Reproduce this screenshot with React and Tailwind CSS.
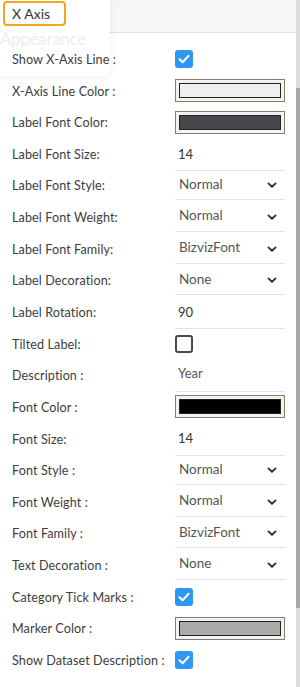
import React from 'react';

const rows = [
  { label: 'Show X-Axis Line :', type: 'check', checked: true },
  { label: 'X-Axis Line Color :', type: 'color', color: '#eef0ef' },
  { label: 'Label Font Color:', type: 'color', color: '#48484c' },
  { label: 'Label Font Size:', type: 'text', value: '14' },
  { label: 'Label Font Style:', type: 'select', value: 'Normal' },
  { label: 'Label Font Weight:', type: 'select', value: 'Normal' },
  { label: 'Label Font Family:', type: 'select', value: 'BizvizFont' },
  { label: 'Label Decoration:', type: 'select', value: 'None' },
  { label: 'Label Rotation:', type: 'text', value: '90' },
  { label: 'Tilted Label:', type: 'check', checked: false },
  { label: 'Description :', type: 'text', value: 'Year', muted: true },
  { label: 'Font Color :', type: 'color', color: '#000000' },
  { label: 'Font Size:', type: 'text', value: '14' },
  { label: 'Font Style :', type: 'select', value: 'Normal' },
  { label: 'Font Weight :', type: 'select', value: 'Normal' },
  { label: 'Font Family :', type: 'select', value: 'BizvizFont' },
  { label: 'Text Decoration :', type: 'select', value: 'None' },
  { label: 'Category Tick Marks :', type: 'check', checked: true },
  { label: 'Marker Color :', type: 'color', color: '#ababab' },
  { label: 'Show Dataset Description :', type: 'check', checked: true },
];

const Chevron = () => (
  <svg width="10" height="7" viewBox="0 0 10 7" className="shrink-0">
    <path d="M1.4 1.4 L5 4.8 L8.6 1.4" fill="none" stroke="#333" strokeWidth="1.9" strokeLinecap="round" strokeLinejoin="round" />
  </svg>
);

const Checkbox = ({ checked }) =>
  checked ? (
    <div className="w-[18px] h-[18px] rounded-[3px] bg-[#2f96f3] flex items-center justify-center">
      <svg width="14" height="14" viewBox="0 0 14 14">
        <path d="M2.5 7.2 L5.6 10.2 L11.6 3.8" fill="none" stroke="#fff" strokeWidth="2" strokeLinecap="round" strokeLinejoin="round" />
      </svg>
    </div>
  ) : (
    <div className="w-[18px] h-[18px] rounded-[3px] border-2 border-[#4a4a4a] bg-white" />
  );

const Field = ({ row }) => {
  if (row.type === 'check') return <Checkbox checked={row.checked} />;
  if (row.type === 'color')
    return (
      <div className="w-[110px] h-[23px] border border-[#8c7b6b] bg-[#f3f3f1] p-[3px]">
        <div className="w-full h-full border border-[#222]" style={{ backgroundColor: row.color }} />
      </div>
    );
  if (row.type === 'text')
    return (
      <div className="w-[110px] h-[28px] flex items-center pl-[3px] border-b border-[#dfe1e3] mt-[6px]">
        <span className={row.muted ? 'text-[13px] text-[#555] -mt-[8px]' : 'text-[13px] text-[#333] -mt-[4px]'}>{row.value}</span>
      </div>
    );
  return (
    <div className="w-[110px] h-[28px] flex items-center justify-between pl-[4px] pr-[8px] border-b border-[#dfe1e3] mt-[2px]">
      <span className="text-[13.5px] text-[#555] -mt-[4px]">{row.value}</span>
      <Chevron />
    </div>
  );
};

export default function App() {
  return (
    <div className="relative w-[300px] h-[687px] bg-white overflow-hidden font-['Lato',sans-serif]">
      {/* header */}
      <div className="h-[33px] w-[296px] bg-[#f5f6f7] border-b border-[#dee1e4]" />

      {/* faded popup */}
      <div className="absolute left-0 top-0 w-[110px] h-[76px] bg-white rounded-br-[6px] shadow-[0_1px_6px_rgba(0,0,0,0.07)]">
        <div className="mt-[1px] ml-[3px] w-[63px] h-[25px] border-2 border-[#f3a71d] rounded-[4px] flex items-center pl-[7px]">
          <span className="text-[14px] text-[#333]">X Axis</span>
        </div>
        <div className="mt-[3px] text-[16.5px] text-[#eceef0] leading-[20px]">Appearance</div>
      </div>

      {/* rows */}
      <div className="absolute left-0 top-[43px] w-[296px]">
        {rows.map((row, i) => (
          <div key={i} className="relative flex items-center h-[31.65px] pl-[12px]">
            <div className="w-[163px] pt-[3px] text-[12.6px] text-[#3d3d3d] tracking-[0.1px]">{row.label}</div>
            <Field row={row} />
          </div>
        ))}
      </div>

      {/* scrollbar */}
      <div className="absolute right-0 top-0 w-[4px] h-[687px] bg-[#dcdcdc]">
        <div className="mt-[88px] h-[520px] bg-[#a9a9a9]" />
      </div>
    </div>
  );
}
